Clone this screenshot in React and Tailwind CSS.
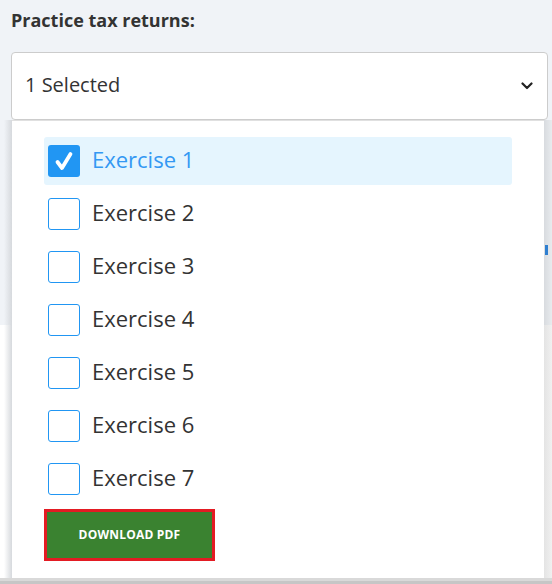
import React from "react";

const font = { fontFamily: '"Open Sans", "Noto Sans", Arial, sans-serif' };

function Check({ checked }) {
  if (checked) {
    return (
      <div className="w-[32px] h-[32px] rounded-[3px] bg-[#2196f3] flex items-center justify-center shrink-0">
        <svg width="22" height="22" viewBox="0 0 22 22" fill="none">
          <path d="M4.5 12 L9 18 L17.5 4" stroke="white" strokeWidth="3.8" strokeLinecap="round" strokeLinejoin="round" />
        </svg>
      </div>
    );
  }
  return <div className="w-[32px] h-[32px] rounded-[3px] border-[1.5px] border-[#2196f3] bg-white shrink-0" />;
}

export default function App() {
  const items = [1, 2, 3, 4, 5, 6, 7];
  return (
    <div className="relative w-[552px] h-[584px] overflow-hidden bg-white" style={font}>
      <div className="h-[325px] bg-[#f0f3f7] pl-[11px] pr-[4px] pt-[4px]">
        <h2 className="text-[18px] font-bold text-[#333] leading-[32px]">Practice tax returns:</h2>
        <div className="mt-[16px] h-[68px] w-[537px] rounded-[4px] border border-[#cccccc] bg-white flex items-center justify-between pl-[13px] pr-[14px]">
          <span className="text-[20px] text-[#333] mb-[2px]">1 Selected</span>
          <svg width="12" height="8" viewBox="0 0 12 8" fill="none">
            <path d="M1.5 1.5 L6 6 L10.5 1.5" stroke="#222" strokeWidth="2.2" strokeLinecap="round" strokeLinejoin="round" />
          </svg>
        </div>
      </div>

      {/* dropdown overlay */}
      <div className="absolute left-0 top-[120px] w-[552px] h-[464px] flex flex-col">
        <div className="flex h-[458px]">
          <div className="w-[12px] flex justify-end">
            <div className="w-[8px] h-full bg-gradient-to-r from-transparent to-[#d6d9dd]" />
          </div>
          <div className="w-[532px] bg-white border-t border-[#e0e0e0] px-[32px] pt-[16px] flex flex-col">
            <div className="flex flex-col gap-[5px]">
              {items.map((n) => (
                <div
                  key={n}
                  className={
                    n === 1
                      ? "h-[48px] rounded-[3px] bg-[#e5f5fe] flex items-center pl-[4px] gap-[12px]"
                      : "h-[48px] flex items-center pl-[4px] gap-[12px]"
                  }
                >
                  <Check checked={n === 1} />
                  <span className={n === 1 ? "text-[22px] text-[#3398f3] mb-[4px]" : "text-[22px] text-[#333] mb-[4px]"}>
                    Exercise {n}
                  </span>
                </div>
              ))}
            </div>
            <div className="mt-[6px] w-[171px] h-[52px] border-[3px] border-[#e31b23] bg-[#3a8230] flex items-center justify-center">
              <span className="text-[12px] font-bold text-white tracking-[0.2px]">DOWNLOAD PDF</span>
            </div>
          </div>
          <div className="w-[8px] flex flex-col">
            <div className="h-[205px] bg-gradient-to-r from-[#d8dbdf] to-[#e8ebee] pt-[125px] pl-[1px]">
              <div className="w-[3px] h-[10px] bg-[#2f7fd0]" />
            </div>
            <div className="flex-1 bg-gradient-to-r from-[#e4e4e4] to-[#f0f0f0]" />
          </div>
        </div>
        <div className="h-[3px] bg-[#d9d9d9]" />
        <div className="h-[3px] bg-[#c6c6c6]" />
      </div>
    </div>
  );
}
